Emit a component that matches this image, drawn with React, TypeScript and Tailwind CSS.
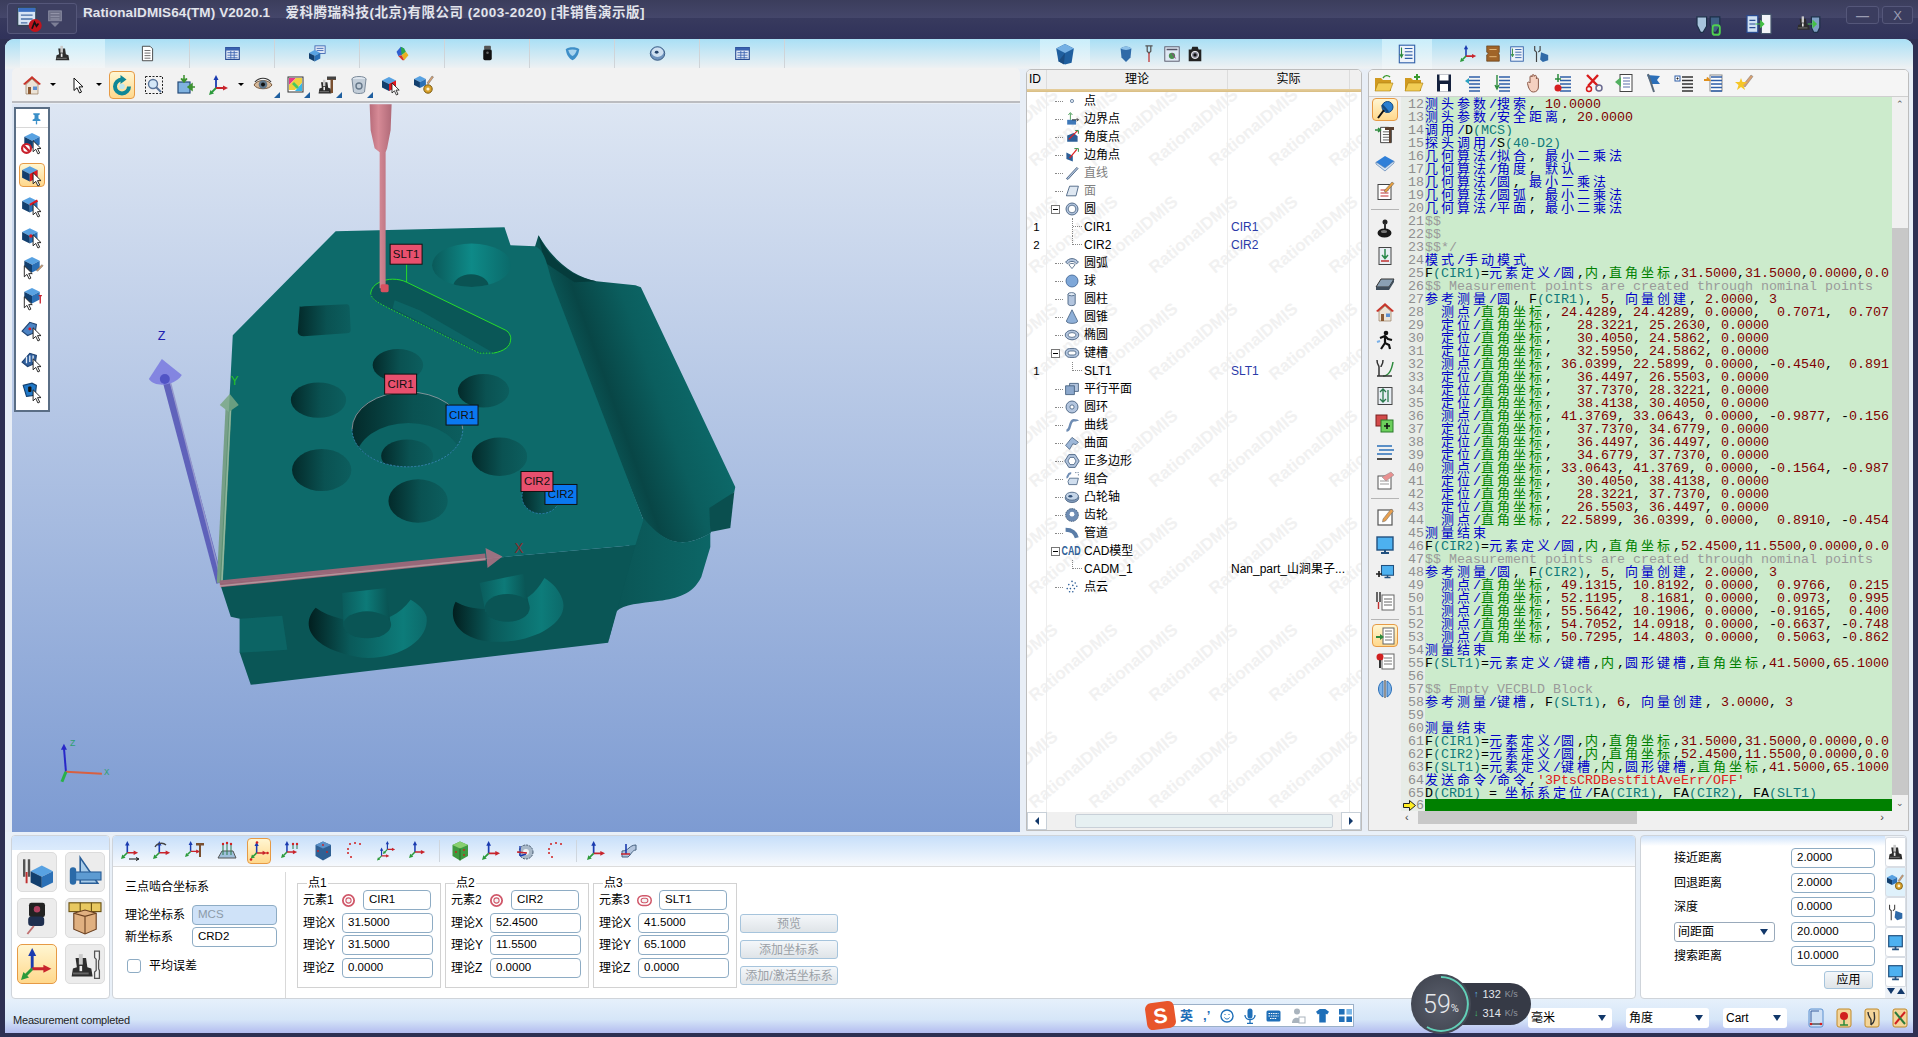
import type { ReactNode } from "react";

const ui = "font-['Liberation_Sans','Noto_Sans_CJK_SC',sans-serif]";

// small shared bits for the toolbar drawings
const cube = (t = "") => (
  <g transform={t}>
    <path d="M7 0l7 3.5L7 7 0 3.5z" fill="#58a2e2" />
    <path d="M0 3.5L7 7v7l-7-3.5z" fill="#123f6e" />
    <path d="M14 3.5v7L7 14V7z" fill="#2b70b6" />
  </g>
);
const cursor = (t = "") => (
  <path transform={t} d="M0 0v10l2.4-2.2L4.4 12l1.6-.8-2-4.1h3.2z" fill="#fff" stroke="#111" strokeWidth=".8" />
);
const axes = (t = "") => (
  <g transform={t} strokeWidth="1.8">
    <path d="M7 13V4" stroke="#1a3bb0" />
    <path d="M4.5 5L7 0l2.5 5z" fill="#1a3bb0" />
    <path d="M7 13h8" stroke="#c8242c" />
    <path d="M14 10.5l5 2.5-5 2.5z" fill="#c8242c" />
    <path d="M7 13l-4 4" stroke="#2b9a3b" />
    <path d="M0 20l1.5-5 3.5 3.5z" fill="#2b9a3b" />
  </g>
);
const cmm = (t = "") => (
  <g transform={t}>
    <path d="M5 4h8l1 7 3 1 1 6H2l1-6 3-1z" fill="#2d2d2d" />
    <rect x="7.5" y="1" width="3" height="8" fill="#c9c9c9" />
    <rect x="8" y="10" width="2" height="4" fill="#eee" />
    <rect x="3" y="15" width="12" height="1.5" fill="#666" />
  </g>
);
const lines = (t = "", c = "#2f5fa8") => (
  <path transform={t} d="M6 4h11M6 7.5h11M6 11h11M6 14.5h11M6 18h11" stroke={c} strokeWidth="1.5" />
);
const page = (t = "") => (
  <g transform={t}>
    <path d="M4 1.5h9l3 3v14H4z" fill="#fff" stroke="#333" />
    <path d="M6.5 6.5h7M6.5 9.5h7M6.5 12.5h7M6.5 15.5h7" stroke="#555" />
  </g>
);
const monitor = (t = "") => (
  <g transform={t}>
    <rect x="2" y="2" width="16" height="13" fill="#4db1f0" stroke="#22507e" strokeWidth="1.4" />
    <path d="M6 18h8M10 15v3" stroke="#22507e" strokeWidth="2" />
  </g>
);
const metal = { fill: "#b3c5de", stroke: "#45607f", strokeWidth: 1.1 };

const ICONS: Record<string, ReactNode> = {
  app: (
    <>
      <rect x="0.5" y="1" width="14" height="14" fill="#d7e5f5" stroke="#345" />
      <rect x="1" y="1.5" width="13" height="3" fill="#3a6ec0" />
      <path d="M3 7h9M3 10h9M3 13h5" stroke="#4a6fa5" />
      <circle cx="14" cy="15" r="5" fill="#c0141c" />
      <path d="M11.5 17.5l2-5 1.5 3 1.5-2" stroke="#111" strokeWidth="1.3" fill="none" />
    </>
  ),
  quick: (
    <>
      <rect x="3" y="1" width="14" height="11" fill="#6e7087" stroke="#8e90a5" />
      <path d="M5 4h10M5 7h10M5 10h10" stroke="#9a9cb0" />
      <path d="M5 14h10l-5 5z" fill="#7d7f96" />
    </>
  ),
  titlea: (
    <>
      <path d="M0 4h8v8l-3 5-2 0-3-6z" fill="#a8c4dc" stroke="#1d2f48" />
      <path d="M11 4h8v8l-3 5-2 0-3-6z" fill="#3f5f84" stroke="#1d2f48" />
      <rect x="13" y="11" width="6" height="8" rx="2" fill="none" stroke="#4fd04f" strokeWidth="1.6" />
    </>
  ),
  titleb: (
    <>
      <rect x="0" y="3" width="9" height="14" fill="#cfe0f2" stroke="#2a4c93" />
      <path d="M2 7h5M2 10h5M2 13h5" stroke="#2a4c93" />
      <rect x="12" y="2" width="8" height="16" fill="#f2f4f8" stroke="#47586e" />
      <path d="M7 10h6M11 7l3 3-3 3" fill="#45c045" stroke="#45c045" />
    </>
  ),
  titlec: (
    <>
      {cmm("translate(-1 3) scale(.65)")}
      <path d="M12 4h7v9l-2 4h-3l-2-4z" fill="#7fa0c4" stroke="#1d2f48" />
      <path d="M9 10h6M13 7l3 3-3 3" fill="#45c045" stroke="#45c045" />
    </>
  ),
  cmm: cmm(),
  doc: page(),
  table: (
    <>
      <rect x="2" y="3" width="16" height="14" fill="#e2eaf6" stroke="#2a4c93" strokeWidth="1.3" />
      <rect x="2" y="3" width="16" height="3.5" fill="#3a62b0" />
      <path d="M4 9h12M4 12h12M4 15h12M8 7v9M12 7v9" stroke="#3a62b0" />
    </>
  ),
  cubedoc: (
    <>
      <rect x="7" y="1" width="12" height="9" fill="#dfe8f6" stroke="#3a62b0" />
      <path d="M9 4h8M9 6.5h8" stroke="#3a62b0" />
      {cube("translate(0 6) scale(.95)")}
    </>
  ),
  gem: (
    <>
      <path d="M3 8l5-6 4 2-3 8-4 1z" fill="#2f5fd0" />
      <path d="M8 2l4 2 2 4-5 4z" fill="#2aa84a" />
      <path d="M14 8l3 4-5 6-3-6z" fill="#e8b020" />
      <path d="M9 12l3 6-2 0-5-5z" fill="#d8342c" />
    </>
  ),
  probe: (
    <>
      <rect x="6" y="1" width="8" height="4" rx="1" fill="#555" />
      <rect x="5" y="5" width="10" height="13" rx="2" fill="#111" />
      <circle cx="10" cy="9" r="1.5" fill="#666" />
    </>
  ),
  shield: (
    <>
      <path d="M2 5c4-3 12-3 16 0-1 7-4 11-8 13C6 16 3 12 2 5z" fill="#3f8fc8" />
      <path d="M5 6c3-1 7-1 10 0-1 4-3 6-5 7-2-1-4-3-5-7z" fill="#a8d4ef" />
    </>
  ),
  cam: (
    <>
      <ellipse cx="10" cy="10" rx="8.5" ry="8" fill="#6f93bd" stroke="#2e4f78" />
      <ellipse cx="10" cy="8.5" rx="7" ry="5.5" fill="#cfe0f0" />
      <ellipse cx="9" cy="8.5" rx="2.2" ry="1.7" fill="#24436b" />
    </>
  ),
  home: (
    <>
      <path d="M10 1l9 8-2 1-7-6-7 6-2-1z" fill="#c8352b" />
      <path d="M4 9.5L10 4l6 5.5V19H4z" fill="#ece3d6" stroke="#9a7c60" strokeWidth=".7" />
      <rect x="6" y="12" width="3" height="7" fill="#8b5a33" />
      <rect x="11" y="11.5" width="4" height="3.5" fill="#5b8fd0" />
    </>
  ),
  arrow: cursor("translate(6 3) scale(1.25)"),
  rotate: (
    <>
      <path d="M10 4.5a7 7 0 1 0 7 7" fill="none" stroke="#0f8796" strokeWidth="4" />
      <path d="M8.5 0l6 4.5-6 4.5z" fill="#0f8796" />
      <circle cx="10" cy="11.5" r="2.8" fill="#bfe7ee" />
    </>
  ),
  zoomwin: (
    <>
      <rect x="1.5" y="1.5" width="17" height="17" fill="none" stroke="#222" strokeDasharray="2 1.5" />
      <circle cx="9" cy="9" r="4.5" fill="#d4e8f8" stroke="#58749a" strokeWidth="1.4" />
      <path d="M12 12l5 5" stroke="#58749a" strokeWidth="2" />
    </>
  ),
  importbox: (
    <>
      <rect x="2" y="7" width="12" height="11" fill="#7fb2e0" stroke="#244a78" strokeWidth="1.2" />
      <path d="M8 0v6M5 3.5L8 7l3-3.5" fill="#4caf3c" stroke="#3b8f2e" strokeWidth="1.5" />
      <path d="M19 12h-6M16 9l-4 3 4 3z" fill="#4caf3c" stroke="#3b8f2e" strokeWidth="1.5" />
    </>
  ),
  axes: axes(),
  eye: (
    <>
      <path d="M1 10c3-6 15-6 18 0-3 5-15 5-18 0z" fill="#d5b89a" stroke="#7a5a3c" />
      <circle cx="10" cy="9.5" r="4.3" fill="#5f768a" />
      <circle cx="10" cy="9.5" r="2" fill="#111" />
      <path d="M2 7c4-5 12-5 16 0" fill="none" stroke="#333" strokeWidth="1.2" />
    </>
  ),
  palette: (
    <>
      <rect x="2" y="2" width="15" height="15" fill="#fff" stroke="#333" />
      <path d="M3 3h7L3 10z" fill="#e8388a" />
      <path d="M10 3h6v5L9 15H3v-5z" fill="#f0d040" />
      <path d="M16 8v8H9z" fill="#38b8e8" />
      <path d="M8 7l5 5-2 2-5-5z" fill="#48c860" />
    </>
  ),
  cmmhammer: (
    <>
      {cmm("translate(0 4) scale(.8)")}
      <path d="M10 2h9v3H16v13h-2.5V5H10z" fill="#7a5030" />
      <rect x="10" y="1.5" width="9" height="3" fill="#444" />
    </>
  ),
  trash: (
    <>
      <ellipse cx="10" cy="4" rx="7" ry="2.5" fill="#dfe6ee" stroke="#7b8a9a" />
      <path d="M3 4l1.5 13c2 2 9 2 11 0L17 4" fill="#c3ced9" stroke="#7b8a9a" />
      <circle cx="10" cy="11" r="3" fill="none" stroke="#66788a" strokeWidth="1.4" />
    </>
  ),
  cubecursor: (
    <>
      {cube("translate(1 2)")}
      <path d="M8 9l7-3.5V12L8 16z" fill="#e01820" />
      {cursor("translate(11 8)")}
    </>
  ),
  cubegear: (
    <>
      {cube("translate(0 1) scale(.85)")}
      <path d="M13 8L18 1l1.5 1-5 7z" fill="#d8a070" stroke="#666" strokeWidth=".5" />
      <circle cx="14" cy="14" r="4.2" fill="#d9a12b" stroke="#7a5a10" />
      <circle cx="14" cy="14" r="1.6" fill="#fff4d0" />
    </>
  ),
  pin: (
    <>
      <path d="M5 2h10v2l-2 1v5l3 2v2H4v-2l3-2V5L5 4z" fill="#3a8fc8" />
      <rect x="9" y="14" width="2" height="5" fill="#3a8fc8" />
    </>
  ),
  cubeno: (
    <>
      {cube("translate(3 0)")}
      <circle cx="5" cy="14" r="4" fill="#fff" stroke="#c8202c" strokeWidth="2" />
      <path d="M2.5 11.5l5 5" stroke="#c8202c" strokeWidth="2" />
      {cursor("translate(11 7)")}
    </>
  ),
  cubeedge: (
    <>
      {cube("translate(1 2)")}
      <path d="M8 9l7-4" stroke="#e01820" strokeWidth="2" />
      {cursor("translate(11 8)")}
    </>
  ),
  cubedot: (
    <>
      {cube("translate(1 2)")}
      <circle cx="9" cy="9" r="1.6" fill="#e01820" />
      {cursor("translate(11 8)")}
    </>
  ),
  cubepen: (
    <>
      {cube("translate(3 0)")}
      <path d="M14 12l5-5 1 1-5 5z" fill="#d8a070" stroke="#555" strokeWidth=".5" />
      {cursor("translate(3 8)")}
    </>
  ),
  cubeprobe: (
    <>
      {cube("translate(3 0)")}
      <path d="M16 7h3M17.5 7v7" stroke="#c8202c" strokeWidth="1.2" />
      {cursor("translate(3 8)")}
    </>
  ),
  sheetcur: (
    <>
      <path d="M1 11l7-8 6 2-1 7-7 3z" fill="#4b83c4" stroke="#1f4372" />
      <circle cx="8" cy="9" r="1.3" fill="#e01820" />
      {cursor("translate(11 8)")}
    </>
  ),
  sheetcur2: (
    <>
      <path d="M1 11l7-8 6 2-1 7-7 3z" fill="#2f5f9e" stroke="#1f4372" />
      <path d="M5 6v6M8 5v6M11 5v6" stroke="#dfeaf6" strokeWidth="1.2" />
      {cursor("translate(11 8)")}
    </>
  ),
  cubed: (
    <>
      <path d="M2 4l8-2 4 2-1 9-8 1z" fill="#1f78c8" stroke="#123f6e" />
      <rect x="6.5" y="5" width="3" height="5" rx="1" fill="#111" />
      {cursor("translate(11 8)")}
    </>
  ),
  folder: (
    <>
      <path d="M1 5h6l2 2h8v11H1z" fill="#d09a20" />
      <path d="M1 18l3-8h15l-3 8z" fill="#f2cd55" stroke="#a87c10" strokeWidth=".6" />
      <path d="M9 5c2-3 5-3 7-1" fill="none" stroke="#3a9a30" strokeWidth="1.4" />
    </>
  ),
  foldernew: (
    <>
      <path d="M1 5h6l2 2h8v11H1z" fill="#d09a20" />
      <path d="M1 18l3-8h15l-3 8z" fill="#f2cd55" stroke="#a87c10" strokeWidth=".6" />
      <path d="M13 1v6M10 4h6" stroke="#3a9a30" strokeWidth="2" />
    </>
  ),
  save: (
    <>
      <rect x="3" y="1.5" width="14" height="17" fill="#14213d" />
      <rect x="5.5" y="1.5" width="9" height="6" fill="#fff" />
      <rect x="6" y="11" width="8" height="7.5" fill="#fff" />
    </>
  ),
  listl: (
    <>
      {lines("translate(-1 0)")}
      <path d="M1 8l4-3v6z" fill="#2aa1c0" />
    </>
  ),
  listr: (
    <>
      {lines("translate(-1 0)")}
      <path d="M3 2v12M1 12l2 4 2-4" stroke="#2c8a3c" strokeWidth="1.4" fill="none" />
    </>
  ),
  hand: (
    <path
      d="M6 8V4c0-1.6 2-1.6 2 0V2.8c0-1.6 2.2-1.6 2.2 0v.6c0-1.4 2.2-1.4 2.2 0V6c0-1.2 2-1.2 2 0v8c0 3-2 5-5 5-2.5 0-3.5-1.5-5-5L3.5 10.5C3 9 5 8.5 6 10z"
      fill="#f5d0c0"
      stroke="#8a5a4a"
    />
  ),
  listred: (
    <>
      {lines("")}
      <circle cx="4" cy="15" r="3.5" fill="#d62020" />
      <path d="M4 1v8M1 6h6" stroke="#2a8a3c" strokeWidth="1.5" />
    </>
  ),
  scissor: (
    <>
      <path d="M3 2l11 11M14 2L4 13" stroke="#d81c1c" strokeWidth="2.4" />
      <circle cx="15" cy="15" r="3" fill="none" stroke="#6a6a90" strokeWidth="1.5" />
      <circle cx="5" cy="16" r="2.5" fill="none" stroke="#d81c1c" strokeWidth="1.5" />
    </>
  ),
  docarrow: (
    <>
      <rect x="6" y="1.5" width="12" height="17" fill="#fff" stroke="#444" />
      <path d="M9 5h7M9 8h7M9 11h7M9 14h7" stroke="#5b6ea8" />
      <path d="M1 9l6-5v10z" fill="#52b060" />
    </>
  ),
  flag: (
    <>
      <path d="M3 2l13 1-3 4 3 4-9 0z" fill="#2c6fb8" />
      <path d="M4 1l6 18" stroke="#5a6a7a" strokeWidth="2" />
    </>
  ),
  listdoc: (
    <>
      {lines("translate(2 0)", "#333")}
      <rect x="1" y="3" width="5" height="5" fill="#fff" stroke="#2f5fa8" />
      <path d="M2.5 5.5h2M3.5 4.5v2" stroke="#222" />
    </>
  ),
  listarrow: (
    <>
      <rect x="6" y="2" width="12" height="16" fill="#fff" stroke="#8a8a8a" />
      {lines("translate(1 0)")}
      <path d="M0 7h5l-2-2.5" fill="none" stroke="#e0901c" strokeWidth="2" />
    </>
  ),
  wand: (
    <>
      <path d="M9 12L17 2l2 1.5L11 14z" fill="#d8a070" stroke="#777" strokeWidth=".5" />
      <path d="M7 5l1.5 4L13 9l-3.5 3 1.5 5-4-3-4 3 1.5-5L1 9l4.5 0z" fill="#f6c628" />
    </>
  ),
  pushpin: (
    <>
      <circle cx="12.5" cy="7" r="5.5" fill="#2a7fd0" stroke="#144a80" />
      <path d="M9 10l-6 8" stroke="#111" strokeWidth="2" />
      <path d="M7 5l6 7" stroke="#144a80" strokeWidth="2.5" />
    </>
  ),
  dochammer: (
    <>
      {page("translate(2 1) scale(.9)")}
      <path d="M0 5h5M3 3l2.5 2L3 7" stroke="#2c8a3c" strokeWidth="1.4" fill="none" />
      <path d="M10 2h9v3h-3v13h-2V5h-4z" fill="#5b4030" />
    </>
  ),
  book: (
    <>
      <path d="M1 9l9-6 9 5-9 7z" fill="#2f7fd8" />
      <path d="M1 9v2l9 7 9-8V8l-9 7z" fill="#d7e6f5" stroke="#3a6aa5" strokeWidth=".6" />
    </>
  ),
  note: (
    <>
      <rect x="3" y="3.5" width="13" height="15" fill="#fff" stroke="#444" />
      <path d="M5.5 9h8M5.5 12h8M5.5 15h8" stroke="#c03030" />
      <path d="M9 10l8-9 2 1.5-8 9z" fill="#e8a040" stroke="#555" strokeWidth=".5" />
    </>
  ),
  joystick: (
    <>
      <circle cx="10" cy="4" r="2.5" fill="#222" />
      <rect x="9" y="5" width="2" height="7" fill="#333" />
      <ellipse cx="9.5" cy="15" rx="7" ry="4.5" fill="#1a1a1a" />
      <ellipse cx="9" cy="13.5" rx="3" ry="1.5" fill="#777" />
    </>
  ),
  docdown: (
    <>
      <rect x="4" y="1.5" width="12" height="17" fill="#e8eef4" stroke="#444" />
      <path d="M10 3v9M7 9l3 3.5 3-3.5" fill="none" stroke="#2a8a4c" strokeWidth="1.5" />
      <path d="M6 15h8" stroke="#c03030" strokeWidth="1.5" />
    </>
  ),
  plate: (
    <>
      <path d="M1 13l5-8h13l-5 8z" fill="#8aa0b4" stroke="#333" />
      <path d="M1 13v3h13v-3zM14 16l5-8V5l-5 8z" fill="#3f4e5c" />
    </>
  ),
  runner: (
    <>
      <circle cx="11" cy="3" r="2.3" fill="#111" />
      <path d="M5 8l5-2 3 3 4 1M10 7l0 6-4 6M10 13l4 2 1 4" fill="none" stroke="#111" strokeWidth="2.2" />
      <path d="M2 12l3-1" stroke="#7ab0e8" strokeWidth="2" />
    </>
  ),
  fork: (
    <>
      <path d="M2 2c0 5 2 5 2 7v9M8 2c0 5-2 5-2 7" fill="none" stroke="#333" strokeWidth="1.5" />
      <path d="M8 18c4 0 8-2 10-14" fill="none" stroke="#2c8a3c" strokeWidth="1.5" />
      <path d="M2 18h15" stroke="#333" strokeWidth="1.5" />
    </>
  ),
  docupdown: (
    <>
      <rect x="3" y="1.5" width="14" height="17" fill="#e8eef4" stroke="#444" />
      <path d="M8 3v13M5 6l3-3 3 3M5 13l3 3 3-3M13 4v12" fill="none" stroke="#2a7a4c" strokeWidth="1.3" />
    </>
  ),
  redgreen: (
    <>
      <rect x="1" y="1" width="11" height="11" fill="#d24a4a" stroke="#7a2020" />
      <rect x="6" y="6" width="12" height="12" fill="#6ccf5c" stroke="#2a7a2a" />
      <path d="M12 9v6M9 12h6" stroke="#111" strokeWidth="1.6" />
    </>
  ),
  lineslist: (
    <>
      <path d="M2 4h15M4 8h15M2 12h15" stroke="#2a6fb8" strokeWidth="1.6" />
      <path d="M2 17h15" stroke="#222" strokeWidth="1.6" />
    </>
  ),
  eraser: (
    <>
      <rect x="3" y="6" width="13" height="13" fill="#fff" stroke="#555" />
      <path d="M5 11h9M5 14h9" stroke="#999" />
      <path d="M7 7l9-5 3 3-8 6z" fill="#e89090" stroke="#888" strokeWidth=".5" />
    </>
  ),
  pencilnote: (
    <>
      <rect x="3" y="3" width="14" height="15" fill="#fff" stroke="#555" strokeWidth="1.2" />
      <path d="M8 12L16 2l2.5 2-8 10-3 1z" fill="#e8a050" stroke="#666" strokeWidth=".5" />
    </>
  ),
  monitor: monitor(),
  plusmonitor: (
    <>
      {monitor("translate(5 1) scale(.75)")}
      <path d="M1 11h6M4 8v6" stroke="#222" strokeWidth="1.7" />
    </>
  ),
  probedoc: (
    <>
      <rect x="7" y="4" width="12" height="15" fill="#fff" stroke="#666" />
      <path d="M9 8h8M9 11h8M9 14h8" stroke="#666" />
      <path d="M2 1v10M5 1v10" stroke="#444" strokeWidth="1.6" />
      <path d="M3.5 11v7" stroke="#c03030" strokeWidth="1.4" />
    </>
  ),
  arrowdoc: (
    <>
      <rect x="8" y="2" width="11" height="16" fill="#fff" stroke="#666" />
      <path d="M10 5h7M10 8h7M10 11h7M10 14h7" stroke="#777" />
      <path d="M1 11h6" stroke="#2c8a3c" strokeWidth="2" />
      <path d="M5 8l4 3-4 3z" fill="#2c8a3c" />
    </>
  ),
  reddoc: (
    <>
      <rect x="7" y="3" width="12" height="15" fill="#fff" stroke="#666" />
      <path d="M9 7h8M9 10h8M9 13h8" stroke="#777" />
      <circle cx="5" cy="6" r="3.5" fill="#d02020" />
      <path d="M5 9v8" stroke="#333" strokeWidth="2" />
    </>
  ),
  mirror: (
    <>
      <path d="M8 2C2 5 2 15 8 18z" fill="#7fb2e6" stroke="#2a6fb8" />
      <path d="M12 2c6 3 6 13 0 16z" fill="#7fb2e6" stroke="#2a6fb8" />
      <path d="M10 1v18" stroke="#333" />
    </>
  ),
  dot: <circle cx="10" cy="10" r="2" fill="#dce6f2" stroke="#5c7696" />,
  boundary: (
    <>
      <rect x="4" y="11" width="11" height="6" fill="#3f78b8" />
      <path d="M8 11V3M5.5 5L8 2l2.5 3" stroke="#2c8a3c" fill="none" />
      <path d="M10 11h8M16 9l2 2-2 2" stroke="#111" fill="none" />
    </>
  ),
  anglepoint: (
    <>
      <path d="M4 8l8-3 5 4v7H4z" fill="#2c5f98" />
      <path d="M6 13L17 2" stroke="#e02020" strokeWidth="1.5" />
      <path d="M14 2h4v4" stroke="#2c8a3c" strokeWidth="1.2" fill="none" />
    </>
  ),
  corner: (
    <>
      <path d="M3 7l8 4v7l-8-3z" fill="#2c5f98" />
      <path d="M7 14L16 3" stroke="#e02020" strokeWidth="1.5" />
      <path d="M13 2h5v4" stroke="#2c8a3c" strokeWidth="1.2" fill="none" />
    </>
  ),
  line: <path d="M3 17L16 3l1.5 1.5L5 18z" {...metal} />,
  plane: <path d="M3 16L7 4h11l-3 12z" {...metal} fill="#dfe8f2" />,
  circle: (
    <>
      <circle cx="10" cy="10" r="7.5" {...metal} />
      <circle cx="10" cy="10" r="4.8" fill="#fff" stroke="#45607f" />
    </>
  ),
  arc: (
    <>
      <path d="M2 9c4-6 12-6 16 0l-2.5 2c-3-4-8-4-11 0z" {...metal} />
      <path d="M6 12c2-2 6-2 8 0l-4 5z" fill="none" stroke="#45607f" />
    </>
  ),
  sphere: <circle cx="10" cy="10" r="7.5" fill="#7ea7d8" stroke="#3a5f90" />,
  cylinder: (
    <>
      <path d="M5 4v12c0 3 9 3 9 0V4z" {...metal} />
      <ellipse cx="9.5" cy="4" rx="4.5" ry="2" fill="#e4edf7" stroke="#45607f" />
    </>
  ),
  cone: <path d="M10 1L3 15c0 4 14 4 14 0z" fill="#8fb0d8" stroke="#45607f" />,
  ellipse: (
    <>
      <ellipse cx="10" cy="10" rx="8.5" ry="6" {...metal} />
      <ellipse cx="10" cy="10" rx="5" ry="3" fill="#fff" stroke="#45607f" />
    </>
  ),
  slot: (
    <>
      <rect x="1.5" y="4.5" width="17" height="11" rx="5.5" {...metal} />
      <rect x="5" y="7.5" width="10" height="5" rx="2.5" fill="#fff" stroke="#45607f" />
    </>
  ),
  parallel: (
    <>
      <path d="M7 3h11v10H7z" {...metal} />
      <path d="M2 6h11v11H2z" {...metal} fill="#8ca8cc" />
    </>
  ),
  ring: (
    <>
      <circle cx="10" cy="10" r="7.5" {...metal} />
      <circle cx="10" cy="10" r="2.6" fill="#fff" stroke="#45607f" />
    </>
  ),
  curve: <path d="M3 17c6 0 3-12 9-13 3 0 5 0 5 1" fill="none" stroke="#6f8db4" strokeWidth="3" />,
  surface: <path d="M2 13l8-10 8 6-3 3-4-1-4 7z" fill="#9db7d8" stroke="#45607f" />,
  hex: (
    <>
      <path d="M6 2h8l5 8-5 8H6l-5-8z" {...metal} />
      <path d="M7.5 5.5h5l2.5 4.5-2.5 4.5h-5L5 10z" fill="#fff" stroke="#45607f" />
    </>
  ),
  combo: (
    <>
      <path d="M3 8c3 0 1-6 6-5" fill="none" stroke="#6f8db4" strokeWidth="2.5" />
      <path d="M5 13l2-4h11l-2 8H6z" fill="#d0deee" stroke="#45607f" />
      <path d="M14 2h4v5" stroke="#45607f" strokeDasharray="1.5 1.5" fill="none" />
    </>
  ),
  camshaft: (
    <>
      <ellipse cx="10" cy="11" rx="8.5" ry="6" fill="#7f99ba" stroke="#45607f" />
      <ellipse cx="10" cy="9" rx="8" ry="5" fill="#c4d5e8" stroke="#45607f" />
      <ellipse cx="8" cy="9" rx="2.5" ry="1.5" fill="#33527a" />
    </>
  ),
  gear: (
    <>
      <circle cx="10" cy="10" r="8" fill="#6f8db4" stroke="#36506f" strokeDasharray="2 1" />
      <circle cx="10" cy="9" r="3" fill="#fff" />
    </>
  ),
  pipe: <path d="M2 6c7 0 12 2 14 10" fill="none" stroke="#5a7da8" strokeWidth="5" />,
  cloud: (
    <path
      d="M10 3h.01M14 5h.01M6 7h.01M11 8h.01M16 9h.01M4 12h.01M8 12h.01M13 12h.01M7 16h.01M11 16h.01"
      stroke="#2f5f98"
      strokeWidth="2"
      strokeLinecap="round"
    />
  ),
  ringred: (
    <>
      <circle cx="10" cy="10" r="7.5" fill="none" stroke="#d0586a" strokeWidth="2.4" />
      <circle cx="10" cy="10" r="3.5" fill="#f3f3f3" stroke="#d0586a" strokeWidth="1.4" />
    </>
  ),
  slotred: (
    <>
      <rect x="1" y="3.5" width="18" height="13" rx="6.5" fill="none" stroke="#d0586a" strokeWidth="2" />
      <rect x="5.5" y="7" width="9" height="6" rx="3" fill="#f3f3f3" stroke="#d0586a" strokeWidth="1.4" />
    </>
  ),
  measure: (
    <>
      <path d="M2 2v11" stroke="#555" strokeWidth="1.5" />
      <path d="M5 2v11" stroke="#555" strokeWidth="1.5" />
      <path d="M3.5 10v7" stroke="#c03030" strokeWidth="1.2" />
      {cube("translate(6 6)")}
    </>
  ),
  square: (
    <>
      <path d="M7 1L18 17H7z" fill="#a9cdea" stroke="#2a5f98" />
      <rect x="3" y="10" width="17" height="5" fill="#5d9bd2" stroke="#2a5f98" strokeWidth=".7" />
      <rect x="0.5" y="7" width="4" height="11" rx="2" fill="#2a6aa8" />
    </>
  ),
  probehead: (
    <>
      <rect x="5" y="0.5" width="10" height="9" rx="1.5" fill="#222" />
      <circle cx="10" cy="4.5" r="2" fill="#b04060" />
      <rect x="4.5" y="9" width="10" height="6" rx="2" fill="#1f2f4f" />
      <path d="M8 15l-4 5" stroke="#c07070" strokeWidth="1.2" />
    </>
  ),
  gdt: (
    <>
      <rect x="0" y="0.5" width="20" height="5.5" fill="#e8c860" stroke="#6a5010" strokeWidth=".7" />
      <path d="M7 .5v5.5M14 .5v5.5" stroke="#6a5010" strokeWidth=".7" />
      <path d="M3 7l7-2 7 2v10l-7 3-7-3z" fill="#e0b080" stroke="#6a4020" strokeWidth=".7" />
      <path d="M10 9v11M3 7l7 2 7-2" fill="none" stroke="#6a4020" strokeWidth=".7" />
    </>
  ),
  wrenchcmm: (
    <>
      {cmm("translate(0 3) scale(.82)")}
      <path d="M16 2h3v5l-.5 1v5l.5 1v5h-3v-4l1-1V7l-1-1z" fill="#f2f2f2" stroke="#555" strokeWidth=".8" />
    </>
  ),
  axmove: (
    <>
      {axes("scale(.9)")}
      <path d="M8 18h9M15 16.5l3 1.5-3 1.5" stroke="#111" fill="none" />
    </>
  ),
  axrotate: (
    <>
      {axes("scale(.9)")}
      <path d="M2 6c2-4 8-5 11-2" fill="none" stroke="#444" strokeWidth="1.3" />
    </>
  ),
  axhammer: (
    <>
      {axes("scale(.8)")}
      <path d="M11 2h8v2.5h-3V16h-2V4.5h-3z" fill="#7a5030" />
    </>
  ),
  axplane: (
    <>
      <path d="M1 17l4-7h11l3 7z" fill="#9fc0dc" stroke="#555" />
      <path d="M6 14V3M10 14V2M14 14V3" stroke="#2a7a4c" />
      <circle cx="6" cy="3" r="1.2" fill="#d02020" />
      <circle cx="10" cy="2" r="1.2" fill="#d02020" />
      <circle cx="14" cy="3" r="1.2" fill="#d02020" />
    </>
  ),
  ax3pt: (
    <>
      {axes("scale(.85) translate(2 1)")}
      <circle cx="8" cy="1.5" r="1.3" fill="#d02020" />
      <circle cx="18.5" cy="12" r="1.3" fill="#d02020" />
      <circle cx="2" cy="18.5" r="1.3" fill="#d02020" />
    </>
  ),
  axdots: (
    <>
      {axes("scale(.85)")}
      <path d="M12 3v5M16 3v5" stroke="#2a7a4c" />
      <circle cx="12" cy="3" r="1.2" fill="#d02020" />
      <circle cx="16" cy="3" r="1.2" fill="#d02020" />
    </>
  ),
  cubebig: (
    <>
      <path d="M10 .5l8 3.5v11l-8 4.5L2.5 15V4z" fill="#2f6094" />
      <path d="M2.5 4L10 7.5 18 4 10 .5z" fill="#5a90c8" />
      <circle cx="5" cy="10" r=".9" fill="#d02020" />
      <circle cx="10" cy="4" r=".9" fill="#d02020" />
      <circle cx="14" cy="11" r=".9" fill="#d02020" />
    </>
  ),
  dotsm: (
    <path d="M5 3h.01M10 2h.01M15 3h.01M3 8h.01M3 12h.01M6 16h.01" stroke="#d02020" strokeWidth="2" strokeLinecap="round" />
  ),
  axtwin: (
    <>
      {axes("scale(.65) translate(0 10)")}
      {axes("scale(.65) translate(9 0)")}
    </>
  ),
  ax321: axes("scale(.85)"),
  cubegreen: (
    <>
      <path d="M10 .5l8 3.5v11l-8 4.5L2.5 15V4z" fill="#3f9a40" />
      <path d="M2.5 4L10 7.5 18 4 10 .5z" fill="#88d070" />
      <path d="M10 7.5v12" stroke="#276a2a" />
      <circle cx="6" cy="11" r=".9" fill="#d02020" />
      <circle cx="14" cy="9" r=".9" fill="#d02020" />
      <circle cx="14" cy="14" r=".9" fill="#d02020" />
    </>
  ),
  axgear: (
    <>
      <circle cx="12" cy="11" r="7" fill="#a8b8c8" stroke="#44586e" strokeDasharray="2 1" />
      <circle cx="12" cy="11" r="3" fill="#eef2f6" />
      <path d="M6 15V5M6 15l6-2" stroke="#1a3bb0" strokeWidth="1.4" />
      <path d="M3 11l10 1" stroke="#c8242c" strokeWidth="1.4" />
    </>
  ),
  pipeax: (
    <>
      <path d="M3 10c7 0 7-6 14-6v5c-4 0-5 5-8 7H3z" fill="#b3c5de" stroke="#45607f" />
      <path d="M7 13V3" stroke="#1a3bb0" strokeWidth="1.6" />
      <path d="M2 13h9" stroke="#c8242c" strokeWidth="1.4" />
    </>
  ),
  tabcube: (
    <>
      <path d="M2 5l8-4 8 4-2 13-6 1.5-6-3z" fill="#1f5f9f" />
      <path d="M2 5l8 4 8-4-8-4z" fill="#74b0e4" />
      <path d="M10 9l-1 10.5L4 16.5z" fill="#1a4c82" />
    </>
  ),
  sidecube: (
    <>
      <path d="M4 4c3-3 9-3 12 0l-1 10-5 5-5-5z" fill="#2f6aa8" />
      <path d="M4 4c3 2 9 2 12 0-3-3-9-3-12 0z" fill="#8cc0e8" />
    </>
  ),
  ystylus: (
    <>
      <path d="M6 1h8M8 1v6l2 2 2-2V1" fill="none" stroke="#555" strokeWidth="1.4" />
      <path d="M10 9v10" stroke="#c03030" strokeWidth="1.4" />
    </>
  ),
  probewin: (
    <>
      <rect x="2" y="2" width="16" height="16" fill="#dfe8f4" stroke="#556" />
      <path d="M4 5h12" stroke="#556" strokeWidth="1.4" />
      <circle cx="10" cy="12" r="3.5" fill="#4a8f50" />
      <path d="M10 9l4 6" stroke="#a03090" />
    </>
  ),
  camera: (
    <>
      <path d="M7 2h6l1 3h3v13H3V5h3z" fill="#222" />
      <circle cx="10" cy="11" r="4" fill="#889" stroke="#fff" />
      <circle cx="10" cy="11" r="1.8" fill="#111" />
    </>
  ),
  docnum: (
    <>
      <rect x="3" y="2" width="14" height="16" fill="#eef3fa" stroke="#2f5fa8" />
      <path d="M8 5h7M8 8h7M8 11h7M8 14h7" stroke="#2f5fa8" />
      <path d="M5 4v8M3.5 10l1.5 3 1.5-3" stroke="#2c8a3c" fill="none" />
    </>
  ),
  axbase: axes("scale(.95)"),
  housebox: (
    <>
      <path d="M3 1h14v7l-1 1 1 2v7H3v-7l2-2-2-1z" fill="#a06428" stroke="#5a3410" strokeWidth=".7" />
      <path d="M6 5h8M6 13h8" stroke="#ecc080" />
    </>
  ),
  ysquare: (
    <>
      <path d="M3 1v5l2 2v11M9 1v5L7 8" fill="none" stroke="#444" strokeWidth="1.3" />
      <path d="M10 8l8 3v6l-6 2-3-3z" fill="#2f6aa8" />
    </>
  ),
  bomb: (
    <>
      <rect x="3" y="1" width="14" height="18" rx="2" fill="#f4d59a" stroke="#c08a2a" />
      <circle cx="10" cy="8" r="4" fill="#d02020" />
      <path d="M10 12v5M6 17h8" stroke="#2c8a3c" strokeWidth="1.5" />
    </>
  ),
  y: (
    <>
      <rect x="3" y="1" width="14" height="18" rx="2" fill="#f4d59a" stroke="#c08a2a" />
      <path d="M6 4c0 5 3 6 3 8v5M12 4c1 6 1 10-3 13" fill="none" stroke="#333" strokeWidth="1.4" />
    </>
  ),
  tools: (
    <>
      <rect x="3" y="1" width="14" height="18" rx="2" fill="#f4d59a" stroke="#c08a2a" />
      <path d="M5 16L15 4" stroke="#d02020" strokeWidth="2" />
      <path d="M5 4l10 12" stroke="#2c7a3c" strokeWidth="2" />
    </>
  ),
  movedot: (
    <>
      <rect x="3" y="1" width="14" height="18" rx="2" fill="#cfe0f5" stroke="#5a90d0" />
      <path d="M5 14V3h8" fill="none" stroke="#3a5f9f" />
      <path d="M5 16h10" stroke="#111" />
      <circle cx="5" cy="16" r="1.3" fill="#d02020" />
      <circle cx="15" cy="16" r="1.3" fill="#d02020" />
    </>
  ),
};

function Ico({ n, s = 20 }: { n: string; s?: number }) {
  return (
    <svg width={s} height={s} viewBox="0 0 20 20" className="shrink-0 overflow-visible">
      {ICONS[n]}
    </svg>
  );
}

const active = "border border-[#e69a45] rounded-[4px] bg-[linear-gradient(180deg,#fff6d2,#ffd88c)]";

function Tool({ n, w, s = 20, on, sub }: { n: string; w: string; s?: number; on?: boolean; sub?: boolean }) {
  return (
    <div className={`relative flex h-[28px] items-center justify-center ${w}`}>
      <div className={`flex items-center justify-center ${on ? `h-[28px] w-[26px] ${active}` : ""}`}>
        <Ico n={n} s={s} />
      </div>
      {sub && (
        <span className="absolute right-[1px] bottom-[1px] h-0 w-0 border-b-[6px] border-l-[6px] border-b-[#1f5f9f] border-l-transparent" />
      )}
    </div>
  );
}

function Caret({ w }: { w: string }) {
  return (
    <div className={`flex h-[28px] items-center justify-center ${w}`}>
      <span className="h-0 w-0 border-x-[3px] border-t-[3px] border-x-transparent border-t-black" />
    </div>
  );
}

function TopTab({ n, w, on, s = 17 }: { n: string; w: string; on?: boolean; s?: number }) {
  return (
    <div
      className={`flex h-full items-center justify-center ${w} ${
        on ? "bg-[linear-gradient(180deg,#c9eefb,#f3f5f6)]" : "border-r border-[#cfd4d8]"
      }`}
    >
      <Ico n={n} s={s} />
    </div>
  );
}

// tree rows of the feature list
type Row = { label: string; icon?: string; id?: string; actual?: string; child?: boolean; last?: boolean; open?: boolean; dim?: boolean };
const ROWS: Row[] = [
  { label: "点", icon: "dot" },
  { label: "边界点", icon: "boundary" },
  { label: "角度点", icon: "anglepoint" },
  { label: "边角点", icon: "corner" },
  { label: "直线", icon: "line", dim: true },
  { label: "面", icon: "plane", dim: true },
  { label: "圆", icon: "circle", open: true },
  { label: "CIR1", id: "1", actual: "CIR1", child: true },
  { label: "CIR2", id: "2", actual: "CIR2", child: true, last: true },
  { label: "圆弧", icon: "arc" },
  { label: "球", icon: "sphere" },
  { label: "圆柱", icon: "cylinder" },
  { label: "圆锥", icon: "cone" },
  { label: "椭圆", icon: "ellipse" },
  { label: "键槽", icon: "slot", open: true },
  { label: "SLT1", id: "1", actual: "SLT1", child: true, last: true },
  { label: "平行平面", icon: "parallel" },
  { label: "圆环", icon: "ring" },
  { label: "曲线", icon: "curve" },
  { label: "曲面", icon: "surface" },
  { label: "正多边形", icon: "hex" },
  { label: "组合", icon: "combo" },
  { label: "凸轮轴", icon: "camshaft" },
  { label: "齿轮", icon: "gear" },
  { label: "管道", icon: "pipe" },
  { label: "CAD模型", icon: "CAD", open: true },
  { label: "CADM_1", actual: "Nan_part_山涧果子...", child: true, last: true },
  { label: "点云", icon: "cloud" },
];

function TreeRow({ r }: { r: Row }) {
  return (
    <div className="flex h-[18px] text-[12px] leading-[18px]">
      <div className="w-[20px] border-r border-[#ededed] text-center text-[11.5px]">{r.id}</div>
      <div className="flex w-[181px] items-center border-r border-[#ededed] pl-[4px]">
        {r.child ? (
          <>
            <span className={`relative ml-[21px] w-[9px] self-start border-l border-dotted border-[#888] ${r.last ? "h-[9px]" : "h-[18px]"}`}>
              <span className="absolute top-[8px] left-0 w-[9px] border-t border-dotted border-[#888]" />
            </span>
            <span className="ml-[3px]">{r.label}</span>
          </>
        ) : (
          <>
            <span className="flex w-[12px] items-center">
              {r.open ? (
                <span className="flex h-[9px] w-[9px] items-center justify-center border border-[#777] bg-white">
                  <span className="h-[1px] w-[5px] bg-black" />
                </span>
              ) : (
                <span className="ml-[4px] w-[8px] border-t border-dotted border-[#888]" />
              )}
            </span>
            <span className="flex w-[17px] items-center justify-center">
              {r.icon === "CAD" ? (
                <span className="scale-x-[.68] text-[13px] font-bold text-[#2f5f98]">CAD</span>
              ) : (
                <Ico n={r.icon ?? "dot"} s={16} />
              )}
            </span>
            <span className={`ml-[4px] ${r.dim ? "text-[#808080]" : ""}`}>{r.label}</span>
          </>
        )}
      </div>
      <div
        className={`w-[122px] border-r border-[#ededed] pl-[3px] whitespace-nowrap ${
          r.actual?.startsWith("Nan") ? "" : "text-[#2a3aa8]"
        }`}
      >
        {r.actual}
      </div>
    </div>
  );
}

const CODE = [
  "测头参数/搜索, 10.0000",
  "测头参数/安全距离, 20.0000",
  "调用/D(MCS)",
  "探头调用/S(40-D2)",
  "几何算法/拟合, 最小二乘法",
  "几何算法/角度, 默认",
  "几何算法/圆, 最小二乘法",
  "几何算法/圆弧, 最小二乘法",
  "几何算法/平面, 最小二乘法",
  "$$",
  "$$",
  "$$*/",
  "模式/手动模式",
  "F(CIR1)=元素定义/圆,内,直角坐标,31.5000,31.5000,0.0000,0.0",
  "$$ Measurement points are created through nominal points",
  "参考测量/圆, F(CIR1), 5, 向量创建, 2.0000, 3",
  "  测点/直角坐标, 24.4289, 24.4289, 0.0000,  0.7071,  0.707",
  "  定位/直角坐标,   28.3221, 25.2630, 0.0000",
  "  定位/直角坐标,   30.4050, 24.5862, 0.0000",
  "  定位/直角坐标,   32.5950, 24.5862, 0.0000",
  "  测点/直角坐标, 36.0399, 22.5899, 0.0000, -0.4540,  0.891",
  "  定位/直角坐标,   36.4497, 26.5503, 0.0000",
  "  定位/直角坐标,   37.7370, 28.3221, 0.0000",
  "  定位/直角坐标,   38.4138, 30.4050, 0.0000",
  "  测点/直角坐标, 41.3769, 33.0643, 0.0000, -0.9877, -0.156",
  "  定位/直角坐标,   37.7370, 34.6779, 0.0000",
  "  定位/直角坐标,   36.4497, 36.4497, 0.0000",
  "  定位/直角坐标,   34.6779, 37.7370, 0.0000",
  "  测点/直角坐标, 33.0643, 41.3769, 0.0000, -0.1564, -0.987",
  "  定位/直角坐标,   30.4050, 38.4138, 0.0000",
  "  定位/直角坐标,   28.3221, 37.7370, 0.0000",
  "  定位/直角坐标,   26.5503, 36.4497, 0.0000",
  "  测点/直角坐标, 22.5899, 36.0399, 0.0000,  0.8910, -0.454",
  "测量结束",
  "F(CIR2)=元素定义/圆,内,直角坐标,52.4500,11.5500,0.0000,0.0",
  "$$ Measurement points are created through nominal points",
  "参考测量/圆, F(CIR2), 5, 向量创建, 2.0000, 3",
  "  测点/直角坐标, 49.1315, 10.8192, 0.0000,  0.9766,  0.215",
  "  测点/直角坐标, 52.1195,  8.1681, 0.0000,  0.0973,  0.995",
  "  测点/直角坐标, 55.5642, 10.1906, 0.0000, -0.9165,  0.400",
  "  测点/直角坐标, 54.7052, 14.0918, 0.0000, -0.6637, -0.748",
  "  测点/直角坐标, 50.7295, 14.4803, 0.0000,  0.5063, -0.862",
  "测量结束",
  "F(SLT1)=元素定义/键槽,内,圆形键槽,直角坐标,41.5000,65.1000",
  "",
  "$$ Empty VECBLD Block",
  "参考测量/键槽, F(SLT1), 6, 向量创建, 3.0000, 3",
  "",
  "测量结束",
  "F(CIR1)=元素定义/圆,内,直角坐标,31.5000,31.5000,0.0000,0.0",
  "F(CIR2)=元素定义/圆,内,直角坐标,52.4500,11.5500,0.0000,0.0",
  "F(SLT1)=元素定义/键槽,内,圆形键槽,直角坐标,41.5000,65.1000",
  "发送命令/命令,'3PtsCRDBestfitAveErr/OFF'",
  "D(CRD1) = 坐标系定位/FA(CIR1), FA(CIR2), FA(SLT1)",
];

const TOKENS = /('[^']*')|(\([^)]*\))|(直角坐标|内)|([\u4e00-\u9fff]+)|(\d+\.?\d*)|(\/)|([^])/g;

function CodeLine({ text }: { text: string }) {
  if (text.startsWith("$$")) return <span className="text-[#9a9a9a]">{text}</span>;
  const parts: ReactNode[] = [];
  let i = 0;
  for (const m of text.matchAll(TOKENS)) {
    i += 1;
    if (m[1]) parts.push(<span key={i} className="text-[#e02020]">{m[1]}</span>);
    else if (m[2]) parts.push(<span key={i} className="text-[#0f7a7a]">{m[2]}</span>);
    else if (m[3]) parts.push(<span key={i} className="text-[13px] tracking-[3px] text-[#008000]">{m[3]}</span>);
    else if (m[4]) parts.push(<span key={i} className="text-[13px] tracking-[3px] text-[#0000c8]">{m[4]}</span>);
    else if (m[5]) parts.push(<span key={i} className="text-[#800000]">{m[5]}</span>);
    else if (m[6]) parts.push(<span key={i} className="text-[#0000c8]">/</span>);
    else parts.push(<span key={i}>{m[7]}</span>);
  }
  return <>{parts}</>;
}

function Field({ v, w, disabled }: { v: string; w: string; disabled?: boolean }) {
  return (
    <div
      className={`flex h-[20px] items-center rounded-[4px] border border-[#8eacc4] pl-[5px] text-[11.5px] ${w} ${
        disabled ? "bg-[#cfe2f8] text-[#8c9aa8]" : "bg-white"
      }`}
    >
      {v}
    </div>
  );
}

function Combo({ v, w, plain }: { v: string; w: string; plain?: boolean }) {
  return (
    <div className={`flex h-[20px] items-center justify-between rounded-[3px] bg-white pr-[6px] pl-[3px] text-[12px] ${plain ? "" : "border border-[#9ab]"} ${w}`}>
      <span>{v}</span>
      <span className="h-0 w-0 border-x-[4px] border-t-[6px] border-x-transparent border-t-[#12386a]" />
    </div>
  );
}

function PointBox({ title, el, icon, name, x, y }: { title: string; el: string; icon: string; name: string; x: string; y: string }) {
  return (
    <fieldset className="h-[112px] w-[144px] border border-[#d2d2d2] pl-[5px]">
      <legend className="ml-[4px] h-[14px] px-[1px] text-[12px] leading-[14px]">{title}</legend>
      <div className="flex h-[20px] items-center">
        <span className="w-[36px]">{el}</span>
        <span className="flex w-[24px] justify-center pr-[6px]"><Ico n={icon} s={15} /></span>
        <Field v={name} w="w-[68px]" />
      </div>
      {[["理论X", x, "mt-[3px]"], ["理论Y", y, "mt-[2px]"], ["理论Z", "0.0000", "mt-[3px]"]].map(([l, v, m]) => (
        <div key={l} className={`flex h-[20px] items-center ${m}`}>
          <span className="w-[39px] whitespace-nowrap">{l}</span>
          <Field v={v} w="w-[91px]" />
        </div>
      ))}
    </fieldset>
  );
}

function ActionBtn({ t }: { t: string }) {
  return (
    <div className="flex h-[19px] w-[98px] items-center justify-center rounded-[3px] border border-[#a6c4dc] bg-[linear-gradient(180deg,#f4f7fa,#dfe4e8)] text-[12px] whitespace-nowrap text-[#9aa0a6]">
      {t}
    </div>
  );
}

function ModuleBtn({ n, on }: { n: string; on?: boolean }) {
  return (
    <div className={`flex h-[40px] w-[40px] items-center justify-center rounded-[5px] ${on ? active : "border border-[#dcdcdc] bg-[#ececec]"}`}>
      <Ico n={n} s={32} />
    </div>
  );
}

function Scene() {
  return (
    <svg viewBox="12 104 1009 728" className="block h-full w-full">
      <defs>
        <linearGradient id="hole" x1="0" x2="1" y1="0" y2="0">
          <stop offset="0" stopColor="#032a2a" />
          <stop offset="0.55" stopColor="#0a5252" />
          <stop offset="1" stopColor="#0c5e5e" />
        </linearGradient>
        <linearGradient id="sink" x1="0" x2="1" y1="0" y2="0">
          <stop offset="0" stopColor="#0a5a5a" />
          <stop offset="0.5" stopColor="#0e8a88" />
          <stop offset="1" stopColor="#0b6a6a" />
        </linearGradient>
        <linearGradient id="bowl" x1="0" x2="1" y1="0" y2="0">
          <stop offset="0" stopColor="#021f1f" />
          <stop offset="0.35" stopColor="#0a5a5a" />
          <stop offset="0.8" stopColor="#0d7c7a" />
          <stop offset="1" stopColor="#0c6a6a" />
        </linearGradient>
        <linearGradient id="post" x1="0" x2="1" y1="0" y2="0">
          <stop offset="0" stopColor="#0a5c5c" />
          <stop offset="0.5" stopColor="#0d7a78" />
          <stop offset="1" stopColor="#095050" />
        </linearGradient>
        <linearGradient id="slope" gradientUnits="userSpaceOnUse" x1="570" y1="420" x2="710" y2="370">
          <stop offset="0" stopColor="#0d6a6a" />
          <stop offset="0.32" stopColor="#084646" />
          <stop offset="0.62" stopColor="#0b5e5e" />
          <stop offset="1" stopColor="#0d6c6c" />
        </linearGradient>
        <linearGradient id="block" x1="0" x2="1" y1="0" y2="0">
          <stop offset="0" stopColor="#0a5454" />
          <stop offset="1" stopColor="#0c6666" />
        </linearGradient>
        <linearGradient id="shaft" x1="0" x2="1" y1="0" y2="0">
          <stop offset="0" stopColor="#b86c7a" />
          <stop offset="0.4" stopColor="#d68a96" />
          <stop offset="1" stopColor="#b06a78" />
        </linearGradient>
      </defs>

      {/* side and front of the part */}
      <path d="M539 235C555 262 575 277 597 281L636 285 641.5 287 736 487 735 492 711.5 512 711.5 533C690 545 670 550 644 520L535 248Z" fill="url(#slope)" />
      <path d="M539 235C552 262 572 277 597 281L575 282 545 262Z" fill="#053c3c" />
      <path d="M710 508L735 492 731 528 711 532Z" fill="#0a4f4f" />
      <path d="M630 545L644 518C670 550 690 545 711 533L711 547 702 577C693 595 678 598 660 601 640 604 625 604 616.6 612L608.7 643Z" fill="url(#block)" />
      <path d="M220 583L636 545 608.7 643 251 685 240 653 240 619 231 617Z" fill="#0a5656" />
      <path d="M240 619L282.5 616 287.6 650 240 653Z" fill="#0c6464" />

      {/* top face */}
      <path d="M336 231L505 227 511 245 535.5 246C545 250 547 262 552 280L644 520 636 545 220 583 233 335Z" fill="#0d6a6a" />

      {/* holes */}
      <ellipse cx="398.3" cy="365" rx="25.3" ry="16" fill="url(#hole)" />
      <ellipse cx="318.8" cy="400" rx="27.7" ry="17.7" fill="url(#hole)" />
      <ellipse cx="484" cy="390.7" rx="25.7" ry="16.7" fill="url(#hole)" />
      <ellipse cx="500" cy="456.7" rx="27.7" ry="19.3" fill="url(#hole)" />
      <ellipse cx="322" cy="470" rx="29.7" ry="21" fill="url(#hole)" />
      <ellipse cx="418.5" cy="501" rx="29.7" ry="21.7" fill="url(#hole)" />
      <ellipse cx="541.5" cy="496.7" rx="19" ry="17" fill="url(#hole)" />
      <ellipse cx="541.5" cy="496.7" rx="19" ry="17" fill="none" stroke="#3b86c8" strokeWidth=".7" strokeDasharray="2 1.5" />

      {/* counterbore */}
      <clipPath id="bore"><ellipse cx="407.8" cy="429.3" rx="55.4" ry="37.5" /></clipPath>
      <ellipse cx="407.8" cy="429.3" rx="55.4" ry="37.5" fill="url(#hole)" />
      <g clipPath="url(#bore)">
        <ellipse cx="409" cy="460" rx="53" ry="37" fill="#0c6464" />
        <ellipse cx="407.5" cy="456" rx="26" ry="16.5" fill="url(#hole)" />
      </g>
      <path d="M352.4 429.3A55.4 37.5 0 0 1 463.2 429.3" fill="none" stroke="#b0a8b0" strokeWidth=".7" />
      <path d="M352.4 429.3A55.4 37.5 0 0 0 463.2 429.3" fill="none" stroke="#4a90d0" strokeWidth=".7" strokeDasharray="2 1.5" />

      {/* countersink */}
      <clipPath id="sinkc"><ellipse cx="472" cy="265" rx="39.5" ry="21.7" /></clipPath>
      <ellipse cx="472" cy="265" rx="39.5" ry="21.7" fill="url(#sink)" />
      <g clipPath="url(#sinkc)">
        <ellipse cx="471.5" cy="287" rx="18" ry="13" fill="#0a5353" />
      </g>

      {/* square pocket */}
      <path d="M300 306Q300 307 305 306L347 304Q350 304 350 308L351 330Q351 333 347 333L304 336Q299 336 298 332Z" fill="url(#hole)" />

      {/* slot */}
      <path d="M393 279C385 279 372 283 371 293 372 300 380 303 387 307L480 353 494 353C505 351 513 345 511 338 510 334 508 331 506 330L407 282C403 280 398 279 393 279Z" fill="#0a5757" />
      <path d="M393 308L480 352 494 353 420 310 395 300Z" fill="#0c6565" />
      <path d="M371 293C372 283 385 279 393 279 398 279 403 280 407 282L506 330C510 332 512 337 511 340 511 346 505 351 494 353" fill="none" stroke="#28dc28" strokeWidth="1" />
      <path d="M371 293C372 300 380 303 387 307L480 353 494 353" fill="none" stroke="#28dc28" strokeWidth="1" strokeDasharray="1.5 1.5" />
      <path d="M407 264V282" stroke="#28dc28" strokeWidth="1" />

      {/* front counterbores */}
      <path d="M316 608C300 625 310 650 363 658 400 660 430 640 427 617 425 610 418 604 411 600 400 615 385 622 367 622 350 622 330 618 316 608Z" fill="url(#bowl)" />
      <path d="M342.5 593L387 588 391 625 344 627Z" fill="url(#post)" />
      <ellipse cx="367.5" cy="625" rx="24" ry="13.5" fill="#0a5555" />
      <path d="M456 602C447 620 460 642 498 642 540 642 570 620 563 600 560 590 553 583 545 578 535 595 525 602 510 604 490 612 470 610 456 602Z" fill="url(#bowl)" />
      <path d="M480 583L523.7 574 529.6 606 486 612Z" fill="url(#post)" />
      <ellipse cx="507.8" cy="608" rx="22.5" ry="14" fill="#0a5555" />

      {/* coordinate triad of the part */}
      <g opacity="0.85">
        <path d="M220 583L166 380" stroke="#5252b4" strokeWidth="7" />
        <path d="M222 583L170 380" stroke="#9090c8" strokeWidth="1.5" />
        <path d="M162 359L149 379C155 388 175 386 182 375Z" fill="#7a7ae0" />
        <ellipse cx="165" cy="379" rx="5" ry="5" fill="#4040c0" />
        <path d="M220 583L229 403" stroke="#6e9a78" strokeWidth="6" />
        <path d="M222 583L231 403" stroke="#a8c4a8" strokeWidth="1.5" />
        <path d="M230 394L220 405 229 412 239 405Z" fill="#7aa884" />
        <path d="M220 584L486 557" stroke="#b0687c" strokeWidth="7" />
        <path d="M220 586L486 559" stroke="#d0a0a8" strokeWidth="1.5" />
        <path d="M503 556.5L486 548 488 568Z" fill="#b47486" />
      </g>
      <text x="158" y="340" className="font-['Liberation_Mono',monospace] text-[13px]" fill="#2020b0">Z</text>
      <text x="231" y="385" className="font-['Liberation_Mono',monospace] text-[13px]" fill="#28c028">Y</text>
      <text x="515" y="553" className="font-['Liberation_Mono',monospace] text-[15px]" fill="#803030">X</text>

      {/* stylus */}
      <path d="M370 104H392L391 130 387.5 148 386 152V288H380V152L375 148 371 130Z" fill="url(#shaft)" />
      <rect x="381" y="284" width="8" height="8" rx="1.5" fill="#d85060" />

      {/* feature labels */}
      {[
        ["SLT1", 390.5, 244, "#e8506e"],
        ["CIR1", 385, 374, "#e8506e"],
        ["CIR1", 446.5, 405, "#0a78f0"],
        ["CIR2", 545.5, 484.5, "#0a78f0"],
        ["CIR2", 521.5, 471.5, "#e8506e"],
      ].map(([t, x, y, c]) => (
        <g key={`${t}${c}`}>
          <rect x={x} y={y} width="32" height="20" fill={c as string} stroke="#111" />
          <text x={(x as number) + 16} y={(y as number) + 14} textAnchor="middle" className="font-['Liberation_Sans',sans-serif] text-[11.5px]" fill="#111">
            {t}
          </text>
        </g>
      ))}

      {/* small triad */}
      <path d="M66 772L64 748" stroke="#2828c8" strokeWidth="2" />
      <path d="M64 744l-3 6h6z" fill="#2828c8" />
      <path d="M66 772L102 774" stroke="#d86040" strokeWidth="2" />
      <path d="M66 772L62 782" stroke="#28b048" strokeWidth="3" />
      <text x="70" y="746" className="font-['Liberation_Mono',monospace] text-[9px]" fill="#30a070">Z</text>
      <text x="104" y="775" className="font-['Liberation_Mono',monospace] text-[9px]" fill="#30a070">X</text>
    </svg>
  );
}

const MARKS = Array.from({ length: 63 }, (_, i) => ({ x: -52 + (i % 7) * 60, y: -32 + Math.floor(i / 7) * 107 }));

export default function App() {
  return (
    <div className={`relative h-[1037px] w-[1918px] overflow-hidden bg-[#2e3052] text-[12px] leading-none text-black ${ui}`}>
      {/* title bar */}
      <header className="flex h-[39px] bg-[linear-gradient(180deg,#3b3d5c_0%,#44466a_45%,#383a5e_46%,#30325a_100%)]">
        <div className="mt-[3px] ml-[7px] flex h-[31px] w-[70px] items-center gap-[3px] rounded-[3px] border border-[#55577a] bg-[#3d3f61] pl-[9px]">
          <Ico n="app" s={26} />
          <Ico n="quick" s={18} />
        </div>
        <div className="mt-[6px] ml-[6px] h-[16px] text-[13.5px] font-bold tracking-[0.1px] whitespace-pre text-[#e2e4ec]">
          RationalDMIS64(TM) V2020.1{"    "}
          <span className="tracking-[0.5px]">爱科腾瑞科技(北京)有限公司 (2003-2020) [非销售演示版]</span>
        </div>
        <div className="ml-auto flex items-start">
          <div className="mt-[12px] mr-[25px] flex gap-[26px]">
            <Ico n="titlea" s={24} />
            <Ico n="titleb" s={24} />
            <Ico n="titlec" s={24} />
          </div>
          <div className="mt-[6px] flex h-[18px] w-[33px] items-center justify-center rounded-[3px] border border-[#55577a] bg-[#3b3d5f] text-[13px] font-bold text-[#9a9cb2]">—</div>
          <div className="mt-[6px] mr-[5px] ml-[3px] flex h-[18px] w-[31px] items-center justify-center rounded-[3px] border border-[#55577a] bg-[#3b3d5f] text-[13px] text-[#9a9cb2]">X</div>
        </div>
      </header>

      <div className="mx-[5px] flex h-[994px] flex-col overflow-hidden rounded-t-[9px] bg-[#e9f0f8]">
        {/* upper row */}
        <div className="flex h-[793px] bg-[linear-gradient(180deg,#a9dff5_0,#eef1f3_29px,#e8eef6_31px)]">
          {/* 3D view column */}
          <section className="flex w-[1018px] flex-col">
            <div className="flex h-[29px] pl-[15px]">
              <TopTab n="cmm" w="w-[85px]" on />
              <TopTab n="doc" w="w-[85px]" />
              <TopTab n="table" w="w-[85px]" />
              <TopTab n="cubedoc" w="w-[85px]" />
              <TopTab n="gem" w="w-[85px]" />
              <TopTab n="probe" w="w-[85px]" />
              <TopTab n="shield" w="w-[85px]" />
              <TopTab n="cam" w="w-[85px]" />
              <TopTab n="table" w="w-[85px]" />
            </div>
            <div className="ml-[7px] flex h-[35px] w-[1008px] items-center rounded-t-[5px] border-b-2 border-[#bbbcc0] bg-[#f2f2f2] pl-[10px]">
              <Tool n="home" w="w-[20px]" />
              <Caret w="w-[22px]" />
              <Tool n="arrow" w="w-[28px]" />
              <Caret w="w-[14px]" />
              <Tool n="rotate" w="w-[32px]" on />
              <Tool n="zoomwin" w="w-[32px]" />
              <Tool n="importbox" w="w-[31px]" />
              <Tool n="axes" w="w-[36px]" />
              <Caret w="w-[8px]" />
              <Tool n="eye" w="w-[36px]" sub />
              <Tool n="palette" w="w-[30px]" sub />
              <Tool n="cmmhammer" w="w-[32px]" sub />
              <Tool n="trash" w="w-[31px]" sub />
              <Tool n="cubecursor" w="w-[34px]" />
              <Tool n="cubegear" w="w-[31px]" />
            </div>
            <div className="relative mt-[1px] ml-[7px] h-[728px] w-[1008px] bg-[linear-gradient(180deg,#dde6f3,#7d9bd2)]">
              <Scene />
              <div className="absolute top-[3px] left-[2px] flex h-[305px] w-[36px] flex-col border-2 border-[#5a6e85] bg-white">
                <div className="flex h-[19px] shrink-0 items-center justify-end border-b border-[#d8d8d8] pr-[5px]">
                  <Ico n="pin" s={13} />
                </div>
                {["cubeno", "cubecursor", "cubeedge", "cubedot", "cubepen", "cubeprobe", "sheetcur", "sheetcur2", "cubed"].map((n) => (
                  <div key={n} className="flex h-[31px] items-center justify-center">
                    <div className={`flex items-center justify-center ${n === "cubecursor" ? `h-[24px] w-[26px] ${active}` : ""}`}>
                      <Ico n={n} s={22} />
                    </div>
                  </div>
                ))}
              </div>
            </div>
          </section>

          {/* feature tree column */}
          <section className="ml-[3px] flex w-[336px] flex-col">
            <div className="flex h-[30px] pl-[14px]">
              <TopTab n="tabcube" w="w-[50px]" on s={22} />
              <div className="ml-[27px] flex items-center gap-[5px]">
                <Ico n="sidecube" s={18} />
                <Ico n="ystylus" s={18} />
                <Ico n="probewin" s={18} />
                <Ico n="camera" s={18} />
              </div>
            </div>
            <div className="flex h-[762px] flex-col overflow-hidden rounded-t-[5px] border border-[#bdbdbd] bg-white">
              <div className="flex h-[19px] shrink-0 bg-[#f0f0f0] text-[12px] leading-[19px]">
                <div className="w-[20px] border-r border-[#dcdcdc] pl-[2px]">ID</div>
                <div className="w-[181px] border-r border-[#dcdcdc] text-center">理论</div>
                <div className="w-[122px] border-r border-[#dcdcdc] text-center">实际</div>
              </div>
              <div className="h-[3px] shrink-0 bg-[linear-gradient(180deg,#e7cf9e,#d8bd82)]" />
              <div className="relative min-h-0 flex-1 overflow-hidden">
                <svg className="absolute inset-0 h-full w-full">
                  {MARKS.map((m) => (
                    <text key={`${m.x}-${m.y}`} x={m.x} y={m.y} transform={`rotate(-40 ${m.x} ${m.y})`} className="text-[17px] font-bold" fill="#f1f1f1">
                      RationalDMIS
                    </text>
                  ))}
                </svg>
                <div className="relative flex h-full flex-col">
                  {ROWS.map((r) => (
                    <TreeRow key={r.label} r={r} />
                  ))}
                  <div className="flex flex-1">
                    <div className="w-[20px] border-r border-[#ededed]" />
                    <div className="w-[181px] border-r border-[#ededed]" />
                    <div className="w-[122px] border-r border-[#ededed]" />
                  </div>
                </div>
              </div>
              <div className="flex h-[18px] shrink-0 items-center bg-[#f0f0f0]">
                <div className="flex h-full w-[20px] items-center justify-center border border-[#c8d0d8] bg-white"><span className="h-0 w-0 border-y-[4px] border-r-[4px] border-y-transparent border-r-[#12386a]" /></div>
                <div className="ml-[28px] h-[14px] w-[258px] rounded-[2px] border border-[#c8d0d8] bg-[#e6f0f2]" />
                <div className="ml-auto flex h-full w-[20px] items-center justify-center border border-[#c8d0d8] bg-white"><span className="h-0 w-0 border-y-[4px] border-l-[4px] border-y-transparent border-l-[#12386a]" /></div>
              </div>
            </div>
          </section>

          {/* code column */}
          <section className="ml-[6px] flex w-[541px] flex-col">
            <div className="flex h-[30px] pl-[14px]">
              <TopTab n="docnum" w="w-[50px]" on s={22} />
              <div className="ml-[28px] flex items-center gap-[6px]">
                <Ico n="axbase" s={18} />
                <Ico n="housebox" s={18} />
                <Ico n="docnum" s={18} />
                <Ico n="ysquare" s={18} />
              </div>
            </div>
            <div className="flex h-[762px] flex-col overflow-hidden rounded-t-[5px] border border-[#bdbdbd] bg-[#f0f0f0]">
              <div className="flex h-[27px] shrink-0 items-center border-b border-[#cfcfcf] bg-[#f5f5f5]">
                {["folder", "foldernew", "save", "listl", "listr", "hand", "listred", "scissor", "docarrow", "flag", "listdoc", "listarrow", "wand"].map((n) => (
                  <div key={n} className="flex w-[30px] justify-center">
                    <Ico n={n} />
                  </div>
                ))}
              </div>
              <div className="flex min-h-0 flex-1">
                <div className="flex w-[32px] shrink-0 flex-col items-center pt-[1px]">
                  <div className={`flex h-[23px] w-[26px] items-center justify-center ${active}`}><Ico n="pushpin" /></div>
                  {["dochammer", "book", "note"].map((n) => (
                    <div key={n} className="flex h-[28px] items-center justify-center"><Ico n={n} /></div>
                  ))}
                  <div className="my-[4px] h-[1px] w-[28px] shrink-0 bg-[#b5b5b5]" />
                  {["joystick", "docdown", "plate", "home", "runner", "fork", "docupdown", "redgreen", "lineslist", "eraser"].map((n) => (
                    <div key={n} className="flex h-[28px] items-center justify-center"><Ico n={n} /></div>
                  ))}
                  <div className="my-[4px] h-[1px] w-[28px] shrink-0 bg-[#b5b5b5]" />
                  {["pencilnote", "monitor", "plusmonitor", "probedoc"].map((n) => (
                    <div key={n} className="flex h-[28px] items-center justify-center"><Ico n={n} /></div>
                  ))}
                  <div className="my-[4px] h-[1px] w-[28px] shrink-0 bg-[#b5b5b5]" />
                  <div className={`flex h-[23px] w-[26px] items-center justify-center ${active}`}><Ico n="arrowdoc" /></div>
                  {["reddoc", "mirror"].map((n) => (
                    <div key={n} className="flex h-[28px] items-center justify-center"><Ico n={n} /></div>
                  ))}
                </div>
                <div className="flex min-w-0 flex-1 flex-col">
                  <div className="flex min-h-0 flex-1">
                    <div className="min-w-0 flex-1 overflow-hidden font-['Liberation_Mono','Noto_Sans_CJK_SC',monospace] text-[13.333px] leading-[13px]">
                      {CODE.map((line, i) => (
                        <div key={i} className="flex h-[13px] whitespace-pre">
                          <div className="w-[24px] shrink-0 bg-[#e7ece7] pt-[1px] pr-[1px] text-right text-[#8f8f8f]">{i + 12}</div>
                          <div className="flex-1 bg-[#ccebcc] pt-[1px]">
                            <CodeLine text={line} />
                          </div>
                        </div>
                      ))}
                      <div className="flex h-[13px] whitespace-pre">
                        <div className="flex w-[24px] shrink-0 items-center justify-end bg-[#e7ece7] pr-[1px] text-[#8f8f8f]">
                          <svg width="13" height="11" viewBox="0 0 13 11" className="shrink-0"><path d="M.5 3.5h6v-3l6 5-6 5v-3h-6z" fill="#ffee22" stroke="#222" /></svg>
                          6
                        </div>
                        <div className="flex-1 bg-[#008000]" />
                      </div>
                    </div>
                    <div className="flex w-[16px] shrink-0 flex-col bg-[#f0f0f0]">
                      <div className="flex h-[16px] items-center justify-center text-[9px] text-[#555]">⌃</div>
                      <div className="mt-[115px] h-[568px] bg-[#c8c8c8]" />
                      <div className="flex h-[16px] items-center justify-center text-[9px] text-[#555]">⌄</div>
                    </div>
                  </div>
                  <div className="flex h-[13px] shrink-0 items-center bg-[#f0f0f0]">
                    <span className="ml-[4px] w-[13px] text-[11px] text-[#444]">‹</span>
                    <div className="h-[13px] w-[219px] bg-[#c8c8c8]" />
                    <span className="mr-[24px] ml-auto text-[11px] text-[#444]">›</span>
                  </div>
                  <div className="h-[6px] shrink-0" />
                </div>
              </div>
            </div>
          </section>
        </div>

        {/* lower row */}
        <div className="mt-[3px] flex h-[164px]">
          <section className="ml-[6px] flex h-full w-[99px] flex-col overflow-hidden rounded-[4px] border border-[#cfd4da] bg-white">
            <div className="h-[14px] shrink-0 bg-[linear-gradient(180deg,#cfe3fb,#dcebfc)]" />
            <div className="grid grid-cols-[40px_40px] gap-x-[8px] gap-y-[6px] pt-[2px] pl-[5px]">
              <ModuleBtn n="measure" />
              <ModuleBtn n="square" />
              <ModuleBtn n="probehead" />
              <ModuleBtn n="gdt" />
              <ModuleBtn n="axes" on />
              <ModuleBtn n="wrenchcmm" />
            </div>
          </section>

          <section className="ml-[2px] flex h-full w-[1524px] flex-col overflow-hidden rounded-[4px] border border-[#cfd4da] bg-white">
            <div className="flex h-[31px] shrink-0 items-center border-b border-[#dcdcdc] bg-[linear-gradient(180deg,#c7dffa,#f6f9fd)] pl-[2px]">
              {["axmove", "axrotate", "axhammer", "axplane", "ax3pt", "axdots", "cubebig", "dotsm", "axtwin", "ax321"].map((n) => (
                <div key={n} className="flex w-[32px] justify-center">
                  <div className={`flex items-center justify-center ${n === "ax3pt" ? `h-[26px] w-[24px] ${active}` : ""}`}><Ico n={n} /></div>
                </div>
              ))}
              <div className="mx-[4px] h-[22px] w-[1px] bg-[#cfd6de]" />
              {["cubegreen", "axbase", "axgear", "dotsm"].map((n, i) => (
                <div key={`${n}${i}`} className="flex w-[32px] justify-center"><Ico n={n} /></div>
              ))}
              <div className="mx-[4px] h-[22px] w-[1px] bg-[#cfd6de]" />
              {["axbase", "pipeax"].map((n) => (
                <div key={n} className="flex w-[32px] justify-center"><Ico n={n} /></div>
              ))}
            </div>
            <div className="flex min-h-0 flex-1">
              <div className="mt-[5px] h-[127px] w-[173px] border-r border-[#d9d9d9] pl-[12px]">
                <div className="mt-[8px] h-[14px] leading-[14px]">三点啮合坐标系</div>
                <div className="mt-[11px] flex h-[20px] items-center">
                  <span className="w-[67px]">理论坐标系</span>
                  <Field v="MCS" w="w-[85px]" disabled />
                </div>
                <div className="mt-[2px] flex h-[20px] items-center">
                  <span className="w-[67px]">新坐标系</span>
                  <Field v="CRD2" w="w-[85px]" />
                </div>
                <div className="mt-[12px] ml-[2px] flex items-center">
                  <span className="h-[14px] w-[14px] rounded-[3px] border border-[#8eacc4] bg-white" />
                  <span className="ml-[8px]">平均误差</span>
                </div>
              </div>
              <div className="mt-[9px] ml-[11px] flex items-start gap-[4px]">
                <PointBox title="点1" el="元素1" icon="ringred" name="CIR1" x="31.5000" y="31.5000" />
                <PointBox title="点2" el="元素2" icon="ringred" name="CIR2" x="52.4500" y="11.5500" />
                <PointBox title="点3" el="元素3" icon="slotred" name="SLT1" x="41.5000" y="65.1000" />
                <div className="mt-[38px] -ml-[1px] flex flex-col gap-[7px]">
                  <ActionBtn t="预览" />
                  <ActionBtn t="添加坐标系" />
                  <ActionBtn t="添加/激活坐标系" />
                </div>
              </div>
            </div>
          </section>

          <section className="ml-[4px] flex h-full w-[267px] overflow-hidden rounded-[4px] border border-[#cfd4da] bg-[linear-gradient(180deg,#cfe3fb_0,#ffffff_10px)]">
            <div className="flex-1 pt-[12px] pl-[33px]">
              {[["接近距离", "2.0000"], ["回退距离", "2.0000"], ["深度", "0.0000"], ["", "20.0000"], ["搜索距离", "10.0000"]].map(([l, v], i) => (
                <div key={i} className="mb-[4.5px] flex h-[20px] items-center">
                  {l ? <span className="w-[117px]">{l}</span> : <div className="w-[117px]"><Combo v="间距面" w="w-[101px]" /></div>}
                  <Field v={v} w="w-[84px]" />
                </div>
              ))}
              <div className="ml-[150px] flex h-[18px] w-[49px] items-center justify-center rounded-[3px] border border-[#a6c4dc] bg-[linear-gradient(180deg,#f4f7fa,#dfe4e8)]">应用</div>
            </div>
            <div className="flex w-[21px] flex-col bg-[#eef2f7] pt-[1px]">
              {["cmm", "cubegear", "ysquare", "monitor", "monitor"].map((n, i) => (
                <div key={`${n}${i}`} className={`flex h-[30px] items-center justify-center rounded-l-[3px] border border-[#d8dde4] ${i === 1 ? "bg-[#dff1fb]" : "bg-white"}`}><Ico n={n} s={17} /></div>
              ))}
              <div className="mt-[1px] flex justify-center gap-[2px]">
                <span className="h-0 w-0 border-x-[4px] border-t-[6px] border-x-transparent border-t-[#12386a]" />
                <span className="h-0 w-0 border-x-[4px] border-b-[6px] border-x-transparent border-b-[#12386a]" />
              </div>
            </div>
          </section>
        </div>

        {/* status bar */}
        <footer className="flex h-[34px] items-center bg-[linear-gradient(180deg,#e6f0fb,#d6e6f8_60%,#b3bcf0)] pr-[3px] pl-[8px]">
          <span className="mt-[8px] text-[11px] tracking-[-0.2px] text-[#222]">Measurement completed</span>
          <div className="mt-[4px] ml-auto flex items-center">
            <Combo v="毫米" w="w-[84px]" plain />
            <Combo v="角度" w="ml-[14px] w-[83px]" plain />
            <Combo v="Cart" w="ml-[14px] w-[64px]" plain />
            <div className="ml-[19px] flex gap-[8px]">
              <Ico n="movedot" />
              <Ico n="bomb" />
              <Ico n="y" />
              <Ico n="tools" />
            </div>
          </div>
        </footer>
      </div>

      {/* floating input-method bar */}
      <div className="absolute top-[1004px] left-[1150px] flex h-[23px] w-[204px] items-center gap-[10px] border border-[#9bb0c8] bg-white pl-[29px] text-[#1f6fb8]">
        <span className="text-[13px] font-bold">英</span>
        <span className="text-[13px] font-bold">,’</span>
        <svg width="14" height="14" viewBox="0 0 14 14"><circle cx="7" cy="7" r="6" fill="none" stroke="#1f6fb8" strokeWidth="1.4" /><path d="M4.5 8.5c1 2 4 2 5 0M5 5v1M9 5v1" fill="none" stroke="#1f6fb8" /></svg>
        <svg width="12" height="16" viewBox="0 0 12 16"><rect x="3.5" y=".5" width="5" height="10" rx="2.5" fill="#1f6fb8" /><path d="M1 7c0 6 10 6 10 0M6 12v4M3 15.5h6" fill="none" stroke="#1f6fb8" strokeWidth="1.3" /></svg>
        <svg width="15" height="12" viewBox="0 0 15 12"><rect x=".5" y=".5" width="14" height="11" rx="1.5" fill="#1f6fb8" /><path d="M2.5 3.5h10M2.5 6h10M4 8.5h7" stroke="#fff" strokeDasharray="1.5 .8" /></svg>
        <svg width="15" height="16" viewBox="0 0 15 16"><circle cx="6" cy="3.5" r="3" fill="#a9b3bd" /><path d="M1 15c0-7 9-7 10 0z" fill="#a9b3bd" /><rect x="8" y="9" width="6" height="6" fill="#fff" stroke="#a9b3bd" /></svg>
        <svg width="13" height="15" viewBox="0 0 14 15"><path d="M4 .5h6l4 3-2 3-1.5-1V15h-7V5.5L2 6.5l-2-3z" fill="#1f6fb8" /></svg>
        <svg width="13" height="13" viewBox="0 0 14 14"><rect width="6" height="6" fill="#1f6fb8" /><rect x="8" width="6" height="6" fill="#7ab6e6" /><rect y="8" width="6" height="6" fill="#1f6fb8" /><rect x="8" y="8" width="6" height="6" fill="#1f6fb8" /></svg>
      </div>
      <div className="absolute top-[1002px] left-[1146px] flex h-[27px] w-[29px] rotate-[-8deg] items-center justify-center rounded-[6px] bg-[#e8552a] text-[21px] font-bold text-white">S</div>

      {/* network meter */}
      <div className="absolute top-[983px] left-[1460px] flex h-[42px] w-[71px] flex-col justify-center gap-[8px] rounded-r-[21px] bg-[#363a46] pl-[14px] text-[#e4e8ec]">
        <div className="flex items-center gap-[4px]"><span className="text-[9px] text-[#5fb6e8]">↑</span><span className="text-[11px]">132</span><span className="text-[9px] text-[#8f959e]">K/s</span></div>
        <div className="flex items-center gap-[4px]"><span className="text-[9px] text-[#43c070]">↓</span><span className="text-[11px]">314</span><span className="text-[9px] text-[#8f959e]">K/s</span></div>
      </div>
      <div className="absolute top-[974px] left-[1411px] flex h-[60px] w-[60px] items-center justify-center rounded-full bg-[radial-gradient(circle,#5a5f6c,#3b3f4a)] font-['Roboto',sans-serif]">
        <svg width="60" height="60" viewBox="0 0 60 60" className="absolute inset-0">
          <path d="M30 3a27 27 0 0 1 14 50 27 27 0 0 1-28 0" fill="none" stroke="#62d0b8" strokeWidth="2" />
        </svg>
        <span className="text-[25px] font-light text-[#e6e8ec]">59</span>
        <span className="mt-[8px] text-[11px] text-[#e6e8ec]">%</span>
      </div>
    </div>
  );
}
